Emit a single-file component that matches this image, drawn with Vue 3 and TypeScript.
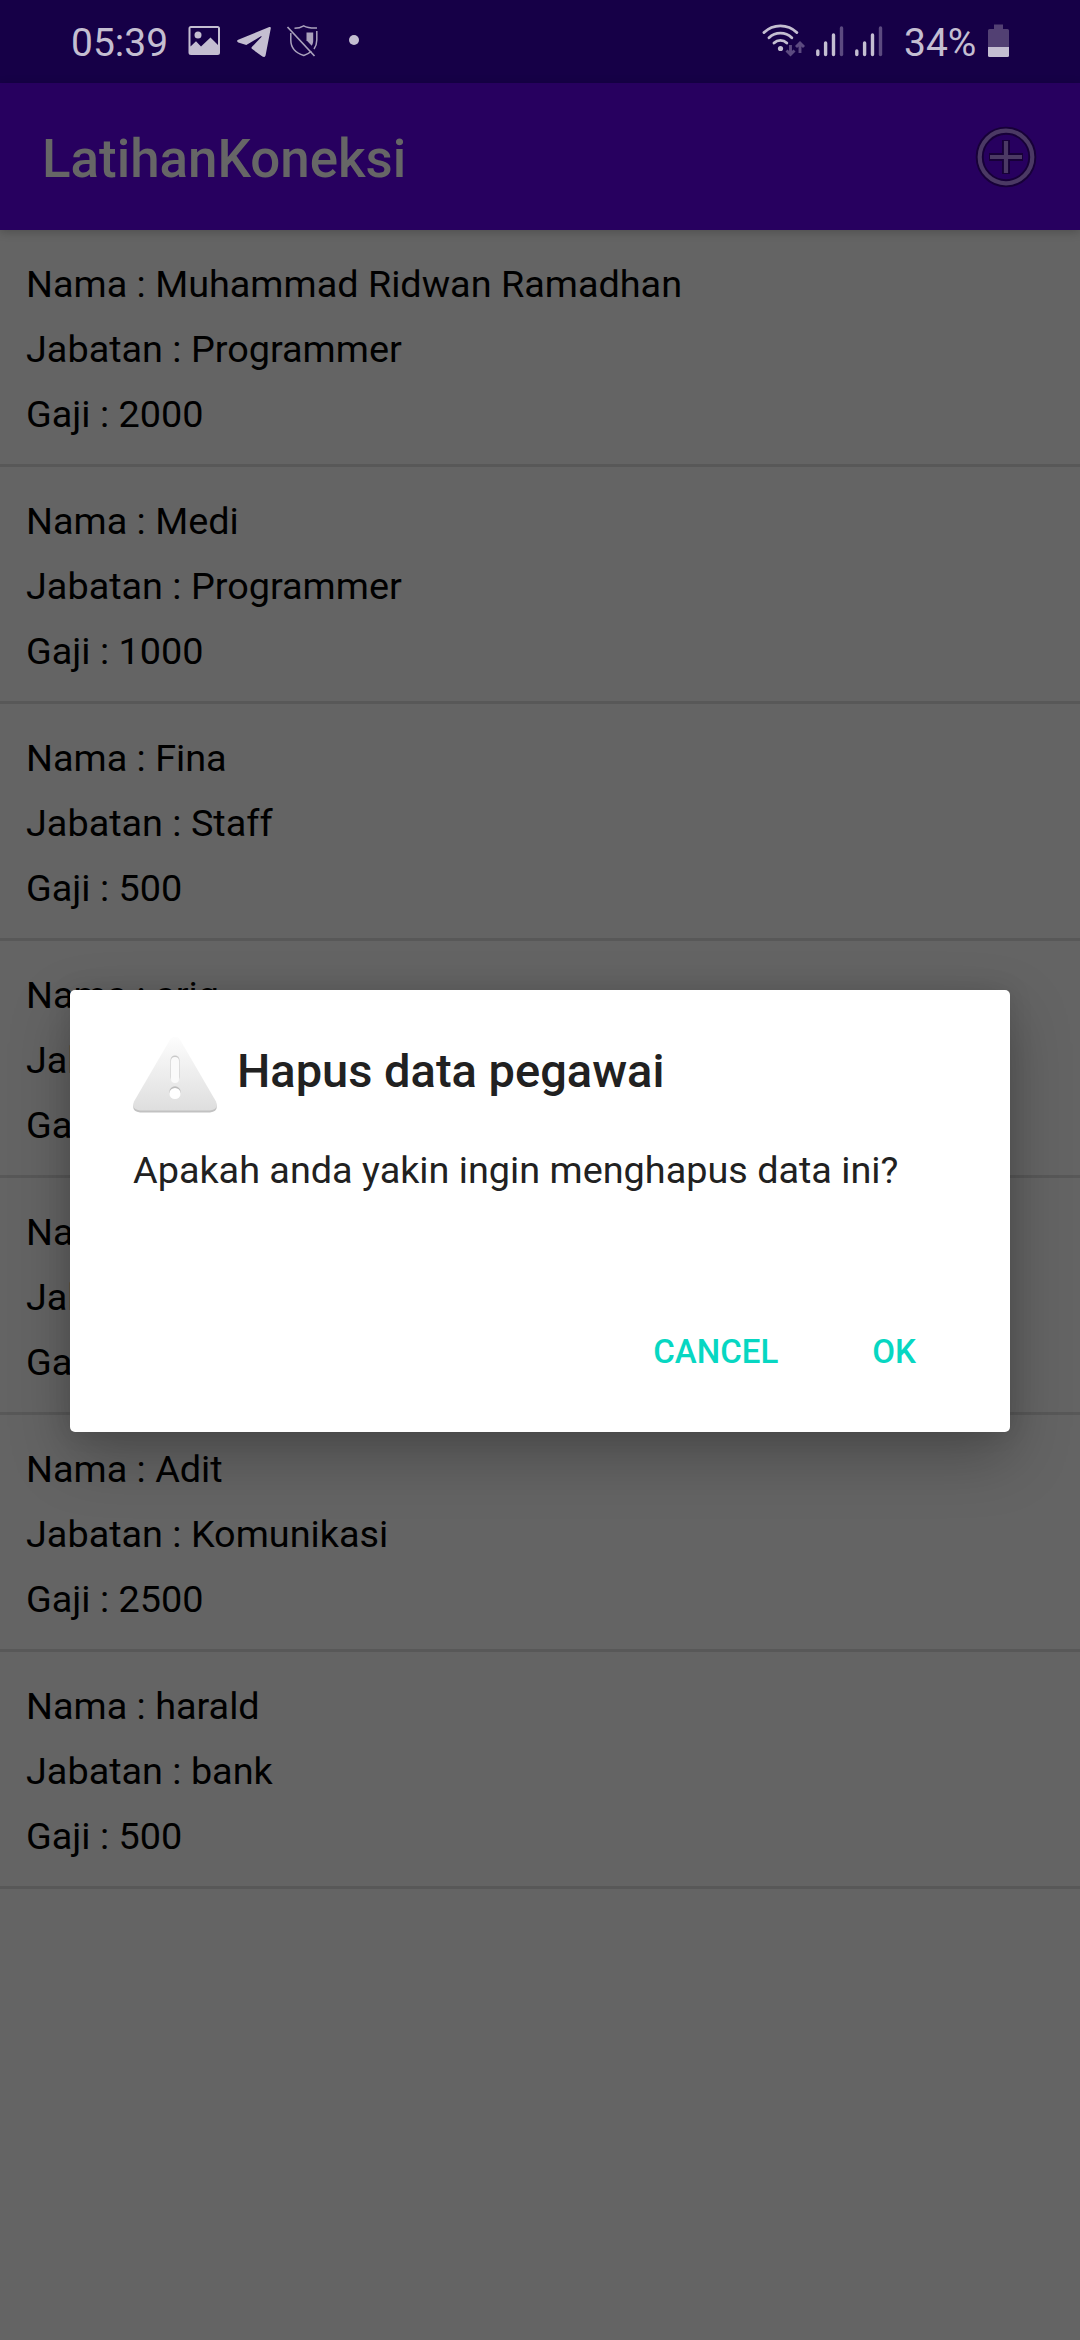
<script setup lang="ts">
interface Employee {
  nama: string
  jabatan: string
  gaji: number
}

const employees: Employee[] = [
  { nama: 'Muhammad Ridwan Ramadhan', jabatan: 'Programmer', gaji: 2000 },
  { nama: 'Medi', jabatan: 'Programmer', gaji: 1000 },
  { nama: 'Fina', jabatan: 'Staff', gaji: 500 },
  { nama: 'ariq', jabatan: '', gaji: 0 },
  { nama: '', jabatan: '', gaji: 0 },
  { nama: 'Adit', jabatan: 'Komunikasi', gaji: 2500 },
  { nama: 'harald', jabatan: 'bank', gaji: 500 },
]
</script>

<template>
  <div class="screen">
    <header class="status">
      <div class="status-left">
        <span class="time">05:39</span>
        <svg class="photo" viewBox="188 25 32 32" width="32" height="32">
          <path
            fill="currentColor"
            fill-rule="evenodd"
            d="M191 26h26.500a2.500 2.500 0 0 1 2.500 2.500v24a2.500 2.500 0 0 1-2.500 2.500h-26.500a2.500 2.500 0 0 1-2.500-2.500v-24a2.500 2.500 0 0 1 2.500-2.500ZM190.500 28v18.500l5.500-5.200 5 5.200 9.500-9 7.500 7.500v-17Z"
          />
          <circle cx="198" cy="35" r="3.500" fill="currentColor" />
        </svg>
        <svg class="plane" viewBox="236 25 36 34" width="36" height="34">
          <path
            fill="currentColor"
            d="M270.800 28.200c.2-1-.5-1.500-1.500-1.200L238.200 39.800c-1.500.7-1.500 2 .1 2.600l8 2.700L260.500 36.500c.9-.5 1.500-.1.900.5L252 46.800c-.8.900-.7 1.500.2 2.300l10.200 7.400c1.600.9 2.800.4 3.200-1.300Z"
          />
        </svg>
        <svg class="shield" viewBox="286 24 34 34" width="34" height="34" fill="none" stroke="currentColor">
          <path stroke-width="1.500" d="M294.500 28.200c3.500 0 6.500-.8 9.200-2.400 3 1.700 7 2.500 13.300 2.200" />
          <path stroke-width="1.500" d="M290.800 33v7c0 8 5 13 13 15.500 3-1 5.500-2.300 7.500-4.200M316.800 31v9c0 3.600-1 6.500-2.800 9" />
          <path stroke-width="1.700" d="M287.500 27l27 29" />
          <path fill="currentColor" stroke="none" d="M306.500 32.500h6.700v8c0 2-.5 3.800-1.500 5.300l-5.200-5.600Z" />
        </svg>
        <span class="dot"></span>
      </div>
      <div class="status-right">
        <svg class="wifi" viewBox="762 22 44 36" width="44" height="36" fill="none" stroke="currentColor">
          <g stroke-width="2.900" stroke-linecap="round">
            <path d="M764 32.500a23.500 23.500 0 0 1 32.800 0" />
            <path d="M769 37.700a16.500 16.500 0 0 1 22.800 0" />
            <path d="M774 43a9.200 9.200 0 0 1 12.800 0" />
          </g>
          <circle cx="780.500" cy="48.500" r="2.600" fill="currentColor" stroke="none" />
          <g class="faint" stroke-width="2.900">
            <path d="M790.500 45v9M786.500 50.500l4 4 4-4M800 53v-9.500M796 47l4-4 4 4" />
          </g>
        </svg>
        <svg v-for="n in 2" :key="n" class="bars" viewBox="815 25 30 32" width="30" height="32" fill="none" stroke="currentColor" stroke-width="3.400" stroke-linecap="round">
          <path d="M817.800 51v3.500M825.600 43v11.500M833.500 35v19.500" />
          <path class="faint" d="M841.500 28v26.500" />
        </svg>
        <span class="percent">34%</span>
        <svg class="battery" viewBox="987 23 24 35" width="24" height="35">
          <path class="cell" d="M994 24.500h9v4.500h4.500a1.500 1.500 0 0 1 1.500 1.500v17h-21v-17a1.500 1.500 0 0 1 1.500-1.500h4.500Z" />
          <path fill="currentColor" d="M988 47h21v8.500a1.500 1.500 0 0 1-1.500 1.500h-18a1.500 1.500 0 0 1-1.500-1.500Z" />
        </svg>
      </div>
    </header>

    <div class="appbar">
      <h1>LatihanKoneksi</h1>
      <svg class="add" viewBox="0 0 70 70" width="70" height="70" fill="none">
        <g class="halo">
          <circle cx="35" cy="35" r="26.300" />
          <path d="M35 18v34M18 35h34" />
        </g>
        <g class="ring">
          <circle cx="35" cy="35" r="26.300" />
          <path d="M35 19v32M19 35h32" />
        </g>
      </svg>
    </div>

    <main class="list">
      <section v-for="(e, i) in employees" :key="i" class="item">
        <p>Nama : {{ e.nama }}</p>
        <p>Jabatan : {{ e.jabatan }}</p>
        <p>Gaji : {{ e.gaji || '' }}</p>
      </section>
    </main>

    <div class="overlay">
      <div class="dialog" role="alertdialog">
        <div class="heading">
          <svg viewBox="0 4 84 84" width="84" height="84">
            <defs>
              <linearGradient id="tri" x1="0" y1="0" x2="0" y2="1">
                <stop offset="0" stop-color="#fdfdfd" />
                <stop offset="1" stop-color="#dedede" />
              </linearGradient>
            </defs>
            <path fill="#c2c2c2" d="M36.500 9.500q5.500-8 11 0L83 70.500q3 8-6 9H7q-9-1-6-9Z" />
            <path fill="url(#tri)" d="M36.500 7.500q5.500-8 11 0L83 68.500q3 8-6 9H7q-9-1-6-9Z" />
            <rect x="37.500" y="22.500" width="9" height="26" rx="4.500" fill="#c9c9c9" />
            <rect x="38" y="24" width="8" height="26" rx="4" fill="#fafafa" />
            <circle cx="42" cy="59" r="5.700" fill="#bcbcbc" />
            <circle cx="42" cy="60.500" r="5.600" fill="#fff" />
          </svg>
          <h2>Hapus data pegawai</h2>
        </div>
        <p class="message">Apakah anda yakin ingin menghapus data ini?</p>
        <div class="actions">
          <button type="button">CANCEL</button>
          <button type="button">OK</button>
        </div>
      </div>
    </div>
  </div>
</template>

<style>
body {
  margin: 0;
  background: #646464;
}
</style>

<style scoped>
.screen {
  position: relative;
  width: 1080px;
  height: 2340px;
  overflow: hidden;
  background: #646464;
  font-family: Roboto, "Noto Sans", sans-serif;
}

h1,
h2,
p {
  margin: 0;
}

svg {
  display: block;
  flex: none;
}

.status {
  display: flex;
  justify-content: space-between;
  box-sizing: border-box;
  height: 83px;
  padding: 0 69px 0 71px;
  background: #160047;
  color: #c4bed1;
  font-size: 39px;
  line-height: 86px;
}

.status-left,
.status-right {
  display: flex;
  align-items: flex-start;
}

.time {
  width: 98px;
}

.photo {
  margin: 25px 0 0 19px;
}

.plane {
  margin: 25px 0 0 16px;
}

.shield {
  margin: 24px 0 0 14px;
  opacity: 0.85;
}

.dot {
  width: 10px;
  height: 10px;
  margin: 35px 0 0 29px;
  border-radius: 50%;
  background: currentColor;
}

.wifi {
  margin: 22px 9px 0 0;
}

.bars {
  margin: 25px 9px 0 0;
}

.faint {
  stroke: #5c4a80;
}

.percent {
  width: 73px;
  margin-left: 11px;
}

.battery {
  margin: 23px 0 0 10px;
}

.cell {
  fill: #524073;
}

.appbar {
  position: relative;
  display: flex;
  align-items: center;
  justify-content: space-between;
  box-sizing: border-box;
  height: 147px;
  padding: 0 39px 0 42px;
  background: #27005f;
  box-shadow: 0 2px 9px rgba(0, 0, 0, 0.22);
}

.appbar h1 {
  color: #666;
  font-size: 52.9px;
  font-weight: 500;
  line-height: 62px;
  padding-top: 4px;
}

.halo {
  stroke: #14002f;
  stroke-width: 8;
  opacity: 0.8;
}

.ring {
  stroke: #4b3964;
  stroke-width: 4.2;
}

.item {
  box-sizing: border-box;
  height: 237px;
  padding: 22px 26px 0;
  border-bottom: 3px solid #585858;
  color: #000;
  font-size: 37.8px;
  line-height: 65px;
}

.overlay {
  position: absolute;
  inset: 0;
  display: flex;
  align-items: flex-start;
  justify-content: center;
  padding-top: 990px;
}

.dialog {
  box-sizing: border-box;
  width: 940px;
  height: 442px;
  padding: 47px 63px 0;
  border-radius: 5px;
  background: #fff;
  color: #212121;
  box-shadow: 0 24px 60px rgba(0, 0, 0, 0.26), 0 0 24px rgba(0, 0, 0, 0.1);
}

.heading {
  display: flex;
  align-items: flex-start;
  gap: 20px;
  height: 84px;
}

.heading h2 {
  font-size: 47px;
  font-weight: 500;
  line-height: 56px;
  padding-top: 6px;
}

.message {
  margin-top: 27px;
  font-size: 37.8px;
  line-height: 44px;
}

.actions {
  display: flex;
  justify-content: flex-end;
  gap: 52px;
  margin-top: 97px;
  padding-right: 10px;
}

.actions button {
  padding: 0 21px;
  border: 0;
  background: none;
  color: #07d7c2;
  font: 500 33.1px/126px Roboto, "Noto Sans", sans-serif;
}
</style>
